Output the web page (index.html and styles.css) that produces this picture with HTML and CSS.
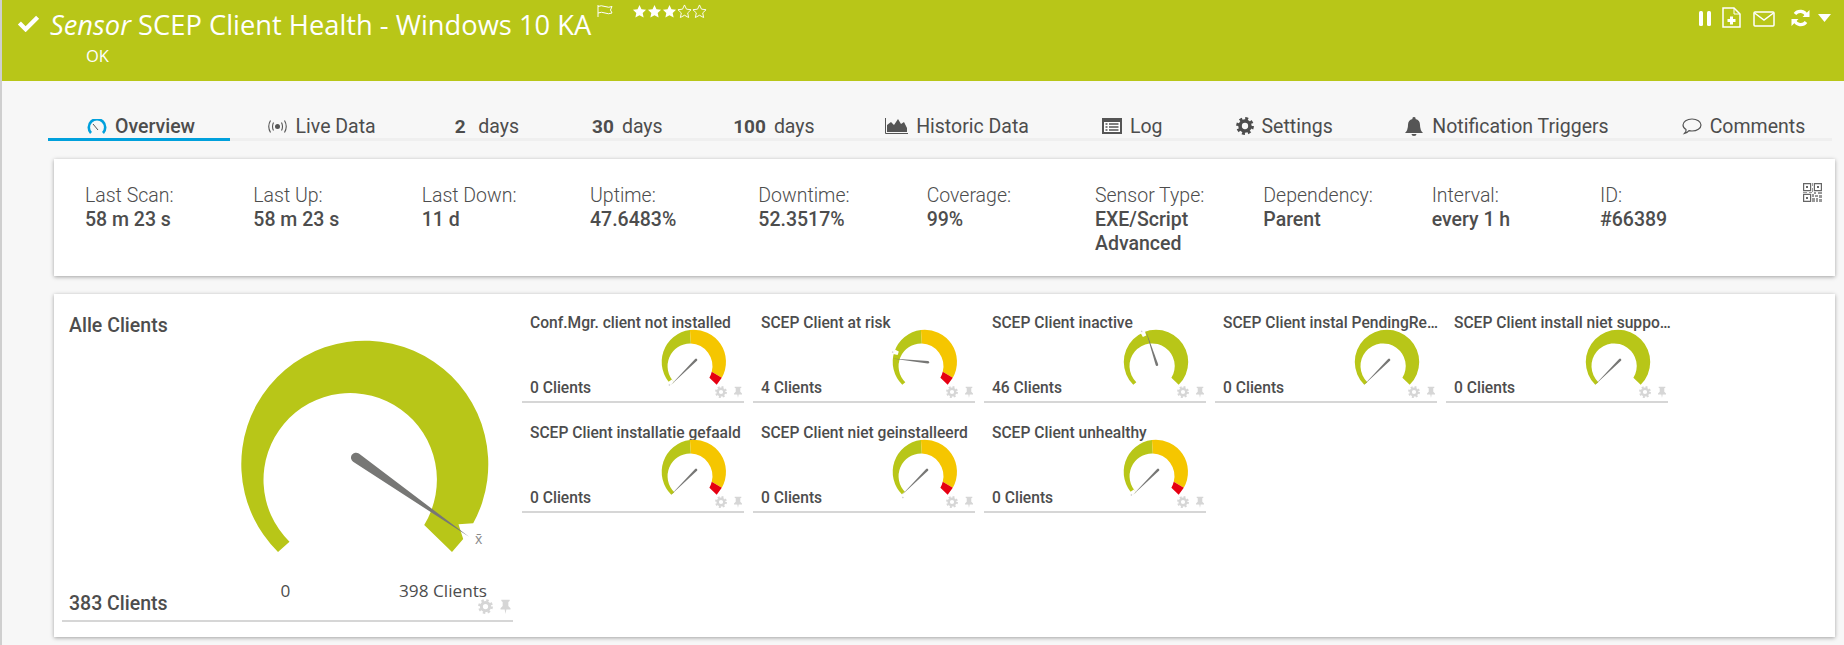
FILE: index.html
```html
<!DOCTYPE html>
<html lang="en">
<head>
    <meta charset="UTF-8">
    <meta name="viewport" content="width=device-width, initial-scale=1.0">
    <title>SCEP Client Health - Windows 10 KA</title>
    <link rel="stylesheet" href="styles.css">
</head>
<body>
    <!-- shared shapes, gauges are drawn around 0,0 at full size and scaled by their viewBox -->
    <svg class="defs" width="0" height="0">
        <symbol id="arc-green" overflow="visible" viewBox="-130 -130 260 230">
            <path fill="#b8c618" d="M-87 88A123.5 123.5 0 1 1 87 88L59 61A86.7 86.7 0 1 0-75.5 77.7Z"/>
        </symbol>
        <symbol id="arc-levels" overflow="visible" viewBox="-130 -130 260 230">
            <path fill="#b8c618" d="M-87 88A123.5 123.5 0 0 1-15.5-122.5L-12-70.7A86.7 86.7 0 0 0-75.5 77.7Z"/>
            <path fill="#f5c600" d="M-15.5-122.5A123.5 123.5 0 0 1 106.5 61L68 38A86.7 86.7 0 0 0-12-70.7Z"/>
            <path fill="#e60012" d="M106.5 61L87 88L59 61Q65 50 68 38Z"/>
        </symbol>
        <symbol id="needle" overflow="visible" viewBox="-130 -130 260 230">
            <path fill="#777775" d="M-11-5L127 0L-11 5A5 5 0 0 1-11-5Z"/>
        </symbol>
        <symbol id="mark" overflow="visible" viewBox="-130 -130 260 230">
            <path fill="#fff" d="M108-7L125-9V9L108 7Z"/>
            <path fill="#ccc" d="M127-5h5v5h-5z"/>
        </symbol>
        <symbol id="gear" viewBox="0 0 16 16">
            <circle cx="8" cy="8" r="4.4" fill="none" stroke="currentColor" stroke-width="3.2"/>
            <circle cx="8" cy="8" r="6.6" fill="none" stroke="currentColor" stroke-width="2.6" stroke-dasharray="2.6 2.58"/>
        </symbol>
        <symbol id="pin" viewBox="0 0 16 18">
            <path fill="currentColor" d="M3 1h10v1.5l-1.6 1v5l2.6 2.6v1.6H9L8 18l-1-5.300H2v-1.600l2.600-2.600v-5L3 2.500z"/>
        </symbol>
        <symbol id="star" viewBox="0 0 16 16">
            <path d="M8 1l2.100 4.500 4.900.600-3.600 3.400 1 4.900L8 12l-4.400 2.400 1-4.900L1 6.100l4.900-.600z"/>
        </symbol>
    </svg>

    <header class="head">
        <div class="head-left">
            <svg class="head-check" viewBox="0 0 24 18" width="23" height="18"><path d="M2.500 9l6.500 6.500L21.500 3" fill="none" stroke="#fff" stroke-width="4.500"/></svg>
            <div>
                <div class="head-title"><em>Sensor</em> SCEP Client Health - Windows 10 KA</div>
                <div class="head-status">OK</div>
            </div>
            <svg class="head-flag" viewBox="0 0 16 12" width="16" height="12"><path d="M1 0v12M1 1.500q3-1.500 7 0t7 0l-1.500 3.500 1.500 3q-3.500 1.500-7 0t-7 0" fill="none" stroke="#fff"/></svg>
            <div class="stars">
                <svg class="star-on" width="15" height="15"><use href="#star"/></svg>
                <svg class="star-on" width="15" height="15"><use href="#star"/></svg>
                <svg class="star-on" width="15" height="15"><use href="#star"/></svg>
                <svg class="star-off" width="15" height="15"><use href="#star"/></svg>
                <svg class="star-off" width="15" height="15"><use href="#star"/></svg>
            </div>
        </div>
        <div class="head-tools">
            <svg class="tool-pause" viewBox="0 0 12 15" width="12" height="15"><rect width="4" height="15" rx="1.500" fill="#fff"/><rect x="8" width="4" height="15" rx="1.500" fill="#fff"/></svg>
            <svg class="tool-file" viewBox="0 0 19 21" width="19" height="21"><path d="M1 1h11l6 6v13H1z" fill="none" stroke="#fff" stroke-width="1.500"/><path d="M12 1v6h6" fill="none" stroke="#fff"/><path d="M9.500 9.500v8M5.500 13.500h8" stroke="#fff" stroke-width="3"/></svg>
            <svg class="tool-mail" viewBox="0 0 22 16" width="22" height="16"><rect x="1" y="1" width="20" height="14" rx="1" fill="none" stroke="#fff" stroke-width="1.500"/><path d="M1.500 2l9.500 7 9.500-7" fill="none" stroke="#fff" stroke-width="1.500"/></svg>
            <svg class="tool-refresh" viewBox="0 0 19 18" width="19" height="18"><path d="M15.500 6.500A6.700 6.700 0 0 0 4 5M3.500 11.500A6.700 6.700 0 0 0 15 13" fill="none" stroke="#fff" stroke-width="3.200"/><path d="M18.500 1v7h-7zM.500 17v-7h7z" fill="#fff"/></svg>
            <svg class="tool-caret" viewBox="0 0 13 8" width="13" height="8"><path d="M0 0h13L6.500 8z" fill="#fff"/></svg>
        </div>
    </header>

    <nav class="tabs">
        <a class="tab tab-active">
            <svg viewBox="0 0 20 15" width="20" height="15"><path d="M4 14A8.200 8.200 0 1 1 16 14" fill="none" stroke="#00a0dc" stroke-width="2.600"/><path d="M6 5l5 6" stroke="#555" stroke-width="1"/></svg>
            Overview
        </a>
        <a class="tab">
            <svg viewBox="0 0 21 15" width="21" height="15"><circle cx="10.500" cy="7.500" r="2.500" fill="#555"/><path d="M6.500 3.500q-2 4 0 8M14.500 3.500q2 4 0 8M3.500 1.500q-3.500 6 0 12M17.500 1.500q3.500 6 0 12" fill="none" stroke="#555" stroke-width="1.100"/></svg>
            Live Data
        </a>
        <a class="tab tab-first-days"><b>2&nbsp;</b>days</a>
        <a class="tab tab-days"><b>30</b>days</a>
        <a class="tab tab-days"><b>100</b>days</a>
        <a class="tab">
            <svg viewBox="0 0 23 16" width="23" height="16"><path d="M.500 0v15.500H23" fill="none" stroke="#555"/><path d="M2 14V7l4-3 3 3 4-6 3 5 3-2 3 6v4z" fill="#555"/></svg>
            Historic Data
        </a>
        <a class="tab">
            <svg viewBox="0 0 20 16" width="20" height="16"><path d="M0 0h20v16H0z" fill="#555"/><path d="M2 4h16v10H2z" fill="#fff"/><path d="M3.500 6h2M7 6h9.500M3.500 9h2M7 9h9.500M3.500 12h2M7 12h9.500" stroke="#555" stroke-width="1.300"/></svg>
            Log
        </a>
        <a class="tab tab-settings">
            <svg width="18" height="18"><use href="#gear"/></svg>
            Settings
        </a>
        <a class="tab">
            <svg viewBox="0 0 20 19" width="20" height="19"><path d="M10 0a1.500 1.500 0 0 1 1.500 2Q16 3 16 8q0 5 3 8H1q3-3 3-8 0-5 4.500-6A1.500 1.500 0 0 1 10 0zM7.500 17h5a2.500 2 0 0 1-5 0z" fill="#555"/></svg>
            Notification Triggers
        </a>
        <a class="tab">
            <svg viewBox="0 0 20 17" width="20" height="17"><path d="M10 1c5 0 9 2.700 9 6s-4 6-9 6q-1.500 0-3-.400Q5 15 2.500 15.500 4.500 13.500 4 11.500 1 9.700 1 7c0-3.300 4-6 9-6z" fill="none" stroke="#555" stroke-width="1.200"/></svg>
            Comments
        </a>
    </nav>

    <section class="card info">
        <div class="info-item"><span>Last Scan:</span><strong>58 m 23 s</strong></div>
        <div class="info-item"><span>Last Up:</span><strong>58 m 23 s</strong></div>
        <div class="info-item"><span>Last Down:</span><strong>11 d</strong></div>
        <div class="info-item"><span>Uptime:</span><strong>47.6483%</strong></div>
        <div class="info-item"><span>Downtime:</span><strong>52.3517%</strong></div>
        <div class="info-item"><span>Coverage:</span><strong>99%</strong></div>
        <div class="info-item"><span>Sensor Type:</span><strong>EXE/Script Advanced</strong></div>
        <div class="info-item"><span>Dependency:</span><strong>Parent</strong></div>
        <div class="info-item"><span>Interval:</span><strong>every 1 h</strong></div>
        <div class="info-item"><span>ID:</span><strong>#66389</strong></div>
        <svg class="qr" viewBox="0 0 19 19" width="19" height="19">
            <path fill="none" stroke="#666" stroke-width="1.200" d="M.600.600h7v7h-7zM11.400.600h7v7h-7zM.600 11.400h7v7h-7z"/>
            <path fill="#666" d="M3 3h2v2H3zM14 3h2v2h-2zM3 14h2v2H3z"/>
            <path fill="#999" d="M9 0h1v3H9zM9 5h1v4H9zM0 9h4v1H0zM6 9h3v1H6zM11 9h2v2h-2zM15 9h4v2h-4zM9 11h2v3H9zM12 12h3v2h-3zM16 12h3v3h-3zM9 15h3v4H9zM13 15h2v4h-2zM16 16h3v3h-3z"/>
        </svg>
    </section>

    <section class="card channels">
        <div class="tile-main">
            <div class="main-left">
                <div class="main-name">Alle Clients</div>
                <div class="main-value">383 Clients</div>
            </div>
            <div class="main-right">
                <svg class="main-gauge" viewBox="-125 -125 260 225" width="260" height="225">
                    <path fill="#b8c618" d="M-87 88A123.500 123.500 0 1 1 108.200 59.300L93.500 60.300L98.200 75L87 88L59.200 61A86.700 86.700 0 1 0-75.500 77.700Z"/>
                    <g transform="rotate(35)"><use href="#needle" x="-130" y="-130" width="260" height="230"/></g>
                    <text x="110" y="80" class="mean">x&#772;</text>
                </svg>
                <div class="main-scale"><span>0</span><span>398 Clients</span></div>
            </div>
            <div class="tile-icons main-icons">
                <svg><use href="#gear"/></svg>
                <svg><use href="#pin"/></svg>
            </div>
        </div>

        <div class="tiles">
            <div class="tile">
                <div class="tile-name">Conf.Mgr. client not installed</div>
                <div class="tile-body">
                    <div class="tile-value">0 Clients</div>
                    <svg class="gauge" viewBox="-130 -130 260 230">
                        <use href="#arc-levels" x="-130" y="-130" width="260" height="230"/>
                        <g transform="rotate(138)"><use href="#mark" x="-130" y="-130" width="260" height="230"/></g>
                        <g transform="rotate(135)"><use href="#needle" x="-130" y="-130" width="260" height="230"/></g>
                    </svg>
                </div>
                <div class="tile-icons"><svg><use href="#gear"/></svg><svg><use href="#pin"/></svg></div>
            </div>
            <div class="tile">
                <div class="tile-name">SCEP Client at risk</div>
                <div class="tile-body">
                    <div class="tile-value">4 Clients</div>
                    <svg class="gauge" viewBox="-130 -130 260 230">
                        <use href="#arc-levels" x="-130" y="-130" width="260" height="230"/>
                        <g transform="rotate(198)"><use href="#mark" x="-130" y="-130" width="260" height="230"/></g>
                        <g transform="rotate(186)"><use href="#needle" x="-130" y="-130" width="260" height="230"/></g>
                    </svg>
                </div>
                <div class="tile-icons"><svg><use href="#gear"/></svg><svg><use href="#pin"/></svg></div>
            </div>
            <div class="tile">
                <div class="tile-name">SCEP Client inactive</div>
                <div class="tile-body">
                    <div class="tile-value">46 Clients</div>
                    <svg class="gauge" viewBox="-130 -130 260 230">
                        <use href="#arc-green" x="-130" y="-130" width="260" height="230"/>
                        <g transform="rotate(246)"><use href="#mark" x="-130" y="-130" width="260" height="230"/></g>
                        <g transform="rotate(252)"><use href="#needle" x="-130" y="-130" width="260" height="230"/></g>
                    </svg>
                </div>
                <div class="tile-icons"><svg><use href="#gear"/></svg><svg><use href="#pin"/></svg></div>
            </div>
            <div class="tile">
                <div class="tile-name">SCEP Client instal PendingRe…</div>
                <div class="tile-body">
                    <div class="tile-value">0 Clients</div>
                    <svg class="gauge" viewBox="-130 -130 260 230">
                        <use href="#arc-green" x="-130" y="-130" width="260" height="230"/>
                        <g transform="rotate(135)"><use href="#needle" x="-130" y="-130" width="260" height="230"/></g>
                    </svg>
                </div>
                <div class="tile-icons"><svg><use href="#gear"/></svg><svg><use href="#pin"/></svg></div>
            </div>
            <div class="tile">
                <div class="tile-name">SCEP Client install niet suppo…</div>
                <div class="tile-body">
                    <div class="tile-value">0 Clients</div>
                    <svg class="gauge" viewBox="-130 -130 260 230">
                        <use href="#arc-green" x="-130" y="-130" width="260" height="230"/>
                        <g transform="rotate(135)"><use href="#needle" x="-130" y="-130" width="260" height="230"/></g>
                    </svg>
                </div>
                <div class="tile-icons"><svg><use href="#gear"/></svg><svg><use href="#pin"/></svg></div>
            </div>
            <div class="tile">
                <div class="tile-name">SCEP Client installatie gefaald</div>
                <div class="tile-body">
                    <div class="tile-value">0 Clients</div>
                    <svg class="gauge" viewBox="-130 -130 260 230">
                        <use href="#arc-levels" x="-130" y="-130" width="260" height="230"/>
                        <g transform="rotate(135)"><use href="#needle" x="-130" y="-130" width="260" height="230"/></g>
                    </svg>
                </div>
                <div class="tile-icons"><svg><use href="#gear"/></svg><svg><use href="#pin"/></svg></div>
            </div>
            <div class="tile">
                <div class="tile-name">SCEP Client niet geinstalleerd</div>
                <div class="tile-body">
                    <div class="tile-value">0 Clients</div>
                    <svg class="gauge" viewBox="-130 -130 260 230">
                        <use href="#arc-levels" x="-130" y="-130" width="260" height="230"/>
                        <g transform="rotate(132)"><use href="#mark" x="-130" y="-130" width="260" height="230"/></g>
                        <g transform="rotate(135)"><use href="#needle" x="-130" y="-130" width="260" height="230"/></g>
                    </svg>
                </div>
                <div class="tile-icons"><svg><use href="#gear"/></svg><svg><use href="#pin"/></svg></div>
            </div>
            <div class="tile">
                <div class="tile-name">SCEP Client unhealthy</div>
                <div class="tile-body">
                    <div class="tile-value">0 Clients</div>
                    <svg class="gauge" viewBox="-130 -130 260 230">
                        <use href="#arc-levels" x="-130" y="-130" width="260" height="230"/>
                        <g transform="rotate(138)"><use href="#mark" x="-130" y="-130" width="260" height="230"/></g>
                        <g transform="rotate(135)"><use href="#needle" x="-130" y="-130" width="260" height="230"/></g>
                    </svg>
                </div>
                <div class="tile-icons"><svg><use href="#gear"/></svg><svg><use href="#pin"/></svg></div>
            </div>
        </div>
    </section>
</body>
</html>
```

FILE: styles.css
```css
html, body {
    margin: 0;
    padding: 0;
    height: 645px;
    overflow: hidden;
}

body {
    font-family: Roboto, "Liberation Sans", sans-serif;
    color: #4d4d4d;
    background-color: #f7f7f7;
    border-left: 2px solid #cfcfcf;
}

.defs {
    position: absolute;
}

/* green sensor header */
.head {
    display: flex;
    justify-content: space-between;
    height: 81px;
    background-color: #b8c618;
    color: #fff;
    font-family: "Open Sans", sans-serif;
}

.head-left {
    display: flex;
    align-items: flex-start;
}

.head-check {
    margin: 14px 10px 0 15px;
}

.head-title {
    font-size: 27.3px;
    line-height: 34px;
    margin-top: 8px;
    white-space: nowrap;
}

.head-status {
    font-size: 16.5px;
    line-height: 20px;
    margin: 4px 0 0 36px;
}

.head-flag {
    margin: 5px 0 0 6px;
}

.stars {
    display: flex;
    margin: 4px 0 0 19px;
}

.star-on {
    fill: #fff;
}

.star-off {
    fill: none;
    stroke: #fff;
}

.head-tools {
    display: flex;
    align-items: flex-start;
    padding-right: 13px;
}

.tool-pause {
    margin: 11px 11px 0 0;
}

.tool-file {
    margin: 7px 12px 0 0;
}

.tool-mail {
    margin: 11px 16px 0 0;
}

.tool-refresh {
    margin: 9px 8px 0 0;
}

.tool-caret {
    margin-top: 14px;
}

/* tab strip */
.tabs {
    display: flex;
    margin: 33px 12px 0 46px;
    border-bottom: 3px solid #efefef;
}

.tab {
    display: flex;
    align-items: center;
    gap: 8px;
    padding: 0 36.5px;
    height: 24px;
    font-size: 19.5px;
    white-space: nowrap;
    margin-bottom: -3px;
    border-bottom: 3px solid transparent;
}

.tab b {
    font-size: 19px;
    font-weight: 700;
}

.tab-first-days {
    padding-left: 42.5px;
}

.tab-days {
    padding-right: 34px;
}

.tab-settings {
    padding-right: 35px;
}

.tab-active {
    font-weight: 500;
    padding: 0 35px 0 39px;
    border-bottom-color: #00a0dc;
}

/* white cards */
.card {
    position: relative;
    width: 1781px;
    margin: 18px 0 0 52px;
    background-color: #fff;
    box-shadow: 0 1px 4px rgba(0, 0, 0, 0.35);
}

.info {
    display: grid;
    grid-template-columns: repeat(10, 168.33px);
    box-sizing: border-box;
    height: 117px;
    padding: 25px 0 0 31px;
    font-size: 19.5px;
    line-height: 24px;
}

.info-item {
    padding-right: 30px;
}

.info-item span,
.info-item strong {
    display: block;
}

.info-item span {
    font-weight: 300;
}

.info-item strong {
    font-weight: 500;
}

.qr {
    position: absolute;
    top: 24px;
    right: 13px;
}

.channels {
    display: flex;
    height: 343px;
}

/* big gauge on the left */
.tile-main {
    position: relative;
    display: flex;
    box-sizing: border-box;
    width: 451px;
    height: 328px;
    margin-left: 8px;
    border-bottom: 2px solid #d6d6d6;
}

.main-left {
    display: flex;
    flex-direction: column;
    justify-content: space-between;
    width: 170.5px;
    padding: 18px 0 2px 7px;
    font-size: 19.5px;
    line-height: 28px;
    font-weight: 500;
    white-space: nowrap;
}

.main-gauge {
    display: block;
    margin-top: 45px;
}

.main-scale {
    display: flex;
    justify-content: space-between;
    width: 247.5px;
    margin-top: 16px;
    padding-left: 41px;
    box-sizing: border-box;
    font-family: "Open Sans", sans-serif;
    font-size: 17.2px;
    line-height: 22px;
}

.mean {
    font-size: 14px;
    fill: #8a8a8a;
    font-family: "Open Sans", sans-serif;
}

.tile-icons {
    position: absolute;
    right: 0;
    bottom: 3px;
    display: flex;
    gap: 5px;
    color: #d6d6d6;
}

.tile-icons svg {
    width: 12px;
    height: 12px;
}

.main-icons {
    right: 0;
    bottom: 6px;
    gap: 5px;
}

.main-icons svg {
    width: 15px;
    height: 15px;
}

/* small gauges */
.tiles {
    display: grid;
    grid-template-columns: repeat(5, 222px);
    grid-auto-rows: 95px;
    column-gap: 9px;
    row-gap: 15px;
    align-content: start;
    margin: 14px 0 0 9px;
}

.tile {
    position: relative;
    box-sizing: border-box;
    border-bottom: 2px solid #d6d6d6;
}

.tile-name {
    padding-left: 8px;
    font-size: 15.6px;
    font-weight: 500;
    line-height: 30px;
    white-space: nowrap;
}

.tile-body {
    display: flex;
    justify-content: space-between;
    padding-left: 8px;
    margin-top: -10px;
    height: 73px;
}

.tile-value {
    align-self: flex-end;
    font-size: 15.6px;
    font-weight: 500;
    line-height: 20px;
    padding-bottom: 3px;
}

.gauge {
    width: 68px;
    height: 60px;
    margin-right: 16px;
    overflow: visible;
}
```
